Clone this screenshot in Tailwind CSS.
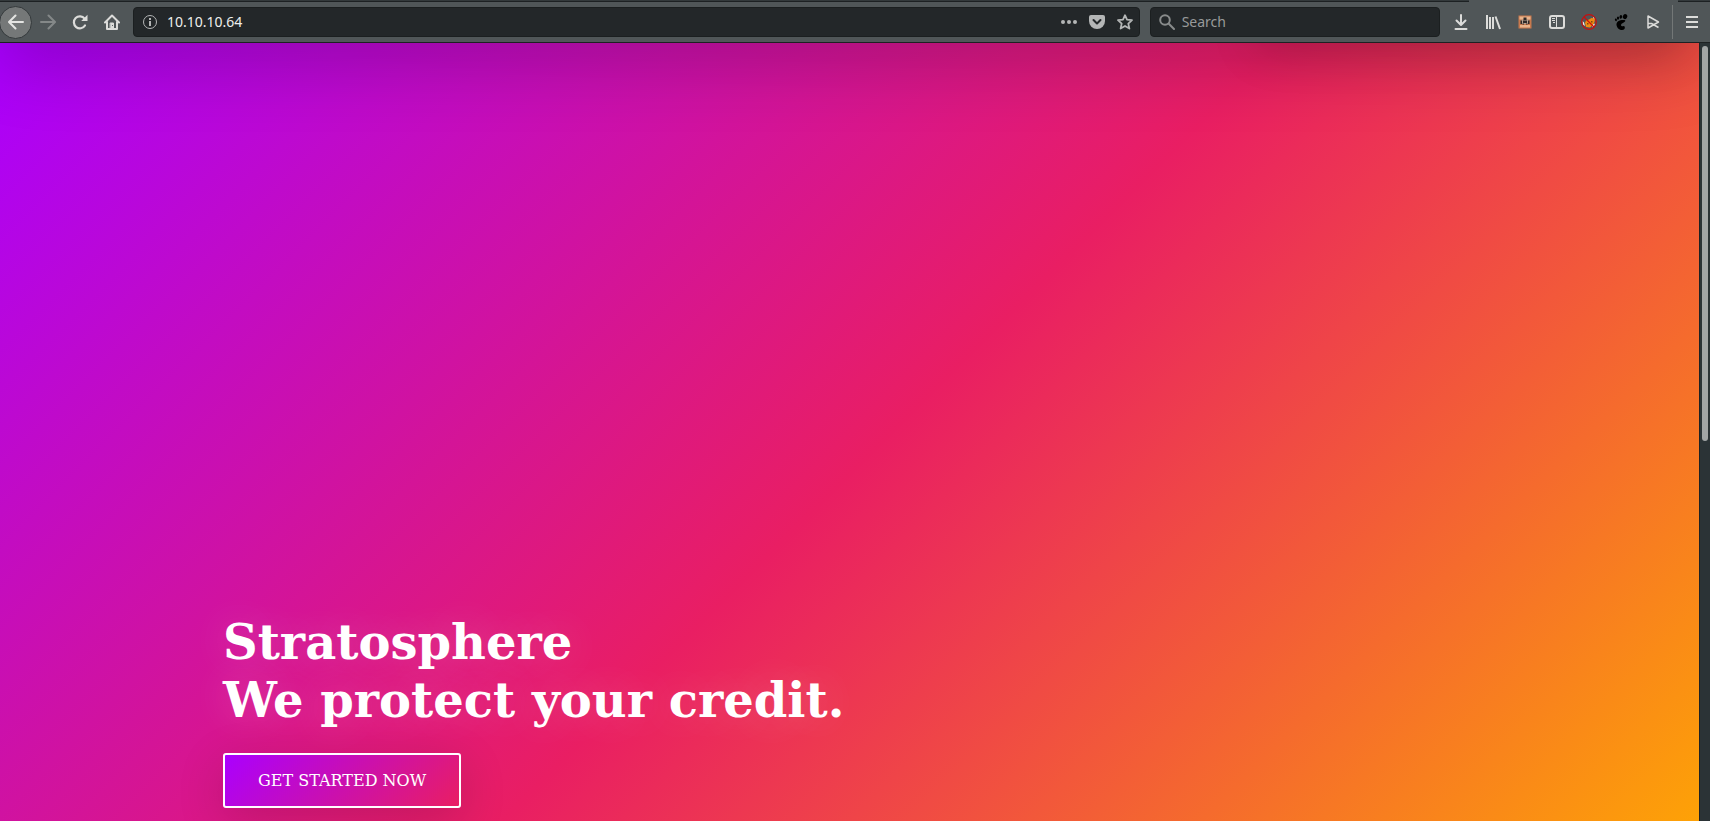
<!DOCTYPE html>
<html lang="en">
<head>
<meta charset="utf-8">
<title>Stratosphere</title>
<script src="https://cdn.jsdelivr.net/npm/@tailwindcss/browser@4"></script>
</head>
<body class="flex h-screen flex-col overflow-hidden bg-[#2b3336] font-['Noto_Sans',sans-serif]">
<header class="shrink-0 border-b border-[#1d2123] bg-[#505658]">
  <!-- lower edge of the tab strip; the gap is the active tab -->
  <div class="flex h-[2px]">
    <div class="grow border-b border-[#1d2123] bg-[#33393b]"></div>
    <div class="w-[209px]"></div>
    <div class="w-[32px] border-b border-[#1d2123] bg-[#33393b]"></div>
  </div>
  <div class="flex h-10 items-center pr-[2px]">
    <nav class="flex items-center" aria-label="Navigation">
      <button aria-label="Back" class="-ml-px grid size-[33px] place-items-center rounded-full border border-[#34393b] bg-[#757878] text-[#e4e4e2]">
        <svg class="size-4" viewBox="0 0 16 16" fill="none" stroke="currentColor" stroke-width="2" stroke-linecap="round" stroke-linejoin="round"><path d="M15 8H1.500M7.500 1.500L1 8l6.500 6.500"/></svg>
      </button>
      <button aria-label="Forward" class="grid size-8 place-items-center text-[#848888]">
        <svg class="size-4" viewBox="0 0 16 16" fill="none" stroke="currentColor" stroke-width="2" stroke-linecap="round" stroke-linejoin="round"><path d="M1 8h13.500M8.500 1.500L15 8l-6.500 6.500"/></svg>
      </button>
      <button aria-label="Reload" class="grid size-8 place-items-center text-[#dcdcda]">
        <svg class="size-4" viewBox="0 0 16 16"><path d="M12.600 4.600A6 6 0 1 0 13 11.500" fill="none" stroke="currentColor" stroke-width="2.200" stroke-linecap="round"/><path d="M15.500 0.800V7H9.200z" fill="currentColor"/></svg>
      </button>
      <button aria-label="Home" class="grid size-8 place-items-center text-[#dcdcda]">
        <svg class="size-4" viewBox="0 0 16 16" fill="none" stroke="currentColor" stroke-width="2" stroke-linecap="round" stroke-linejoin="round"><path d="M1 8.500L8 1.500l7 7M3 8v7h10V8"/><path d="M6.500 9h3v5.500h-3z" fill="currentColor" stroke-width="1"/><path d="M8.500 11.500v.1" stroke="#505658" stroke-width="1"/></svg>
      </button>
    </nav>
    <div class="ml-[5px] flex h-[30px] grow items-center rounded border border-[#1b1f20] bg-[#232729] pr-[6px] pl-2 text-[#b4b6b6]">
      <svg class="size-4" viewBox="0 0 16 16" fill="none" stroke="currentColor"><circle cx="8" cy="8" r="6.500"/><path d="M8 7v5M8 4v2" stroke-width="2"/></svg>
      <input aria-label="Address" value="10.10.10.64" class="ml-[9px] min-w-0 grow bg-transparent text-sm text-[#eeeeec] outline-none">
      <div class="flex items-center gap-3">
        <button aria-label="Page actions"><svg class="block size-4" viewBox="0 0 16 16" fill="currentColor"><circle cx="2" cy="8" r="2"/><circle cx="8" cy="8" r="2"/><circle cx="14" cy="8" r="2"/></svg></button>
        <button aria-label="Save to Pocket"><svg class="block size-4" viewBox="0 0 16 16"><path d="M2 1h12q2 0 2 2v4a8 8 0 0 1-16 0V3q0-2 2-2z" fill="currentColor"/><path d="M4.500 6L8 9.500 11.500 6" fill="none" stroke="#232729" stroke-width="2" stroke-linecap="round" stroke-linejoin="round"/></svg></button>
        <button aria-label="Bookmark"><svg class="block size-4" viewBox="0 0 16 16" fill="none" stroke="currentColor" stroke-width="1.800" stroke-linejoin="round"><path d="M8 1.200l2 4.500 5 .5-3.700 3.400 1.100 5L8 12l-4.400 2.600 1.100-5L1 6.200l5-.5z"/></svg></button>
      </div>
    </div>
    <label class="ml-[10px] flex h-[30px] w-[17%] items-center rounded border border-[#1b1f20] bg-[#232729] pl-2 text-[#888b8b]">
      <svg class="size-4" viewBox="0 0 16 16" fill="none" stroke="currentColor" stroke-width="2" stroke-linecap="round"><circle cx="6" cy="6" r="4.800"/><path d="M9.800 9.800L15 15"/></svg>
      <input aria-label="Search" placeholder="Search" class="ml-[7px] min-w-0 grow bg-transparent text-sm outline-none placeholder:text-[#989a9a]">
    </label>
    <div class="ml-[5px] flex items-center text-[#dcdcda]">
      <button aria-label="Downloads" class="grid size-8 place-items-center"><svg class="size-4" viewBox="0 0 16 16" fill="none" stroke="currentColor" stroke-width="2" stroke-linecap="round" stroke-linejoin="round"><path d="M8 1v9.500M3.500 6.500L8 11l4.500-4.500M2.500 15h11"/></svg></button>
      <button aria-label="Library" class="grid size-8 place-items-center"><svg class="size-4" viewBox="0 0 16 16" fill="none" stroke="currentColor" stroke-width="2"><path d="M2 1v14M5 3v12M8 3v12M10.500 2.500L15 15"/></svg></button>
      <button aria-label="Robot extension" class="grid size-8 place-items-center"><svg class="size-4" viewBox="0 0 16 16"><path fill="#c9794d" d="M1.500 1.500h13v13h-13z"/><path fill="#e9b48c" d="M2.500 2.500h11v3h-11zM3 11h10v2.500H3z"/><path fill="#b7a08e" d="M4 5.500h8V10H4z"/><path fill="#2f2a29" d="M6.500 3.500h3V6h-3zM6 6.500h4V9H6zM3.500 6.500H5V10H3.500zM11 6.500h1.500V10H11zM5.500 9.500H7v1H5.500zM9 9.500h1.500v1H9z"/></svg></button>
      <button aria-label="Sidebars" class="grid size-8 place-items-center"><svg class="size-4" viewBox="0 0 16 16" fill="none" stroke="currentColor"><rect x="1" y="2" width="14" height="12" rx="2" stroke-width="2"/><path d="M7.500 2v12"/><path d="M3 4.500h3M3 6.500h3M4 8.500h2"/></svg></button>
      <button aria-label="Proxy disabled" class="grid size-8 place-items-center"><svg class="size-4" viewBox="0 0 16 16"><path fill="#ee8a12" d="M4 9l1-2.500 3-1L10.500 4 14 4.500 13.500 8 12 11l-3 2.500-4-.5z"/><path fill="#f3efe8" d="M1.500 7L3 8.500 4 12l-2-1.500zM12 10.500l2-1-1 2.500-2 1.500zM12.500 2.800l1.500 1.700-2-.3z"/><path fill="#7b4a10" d="M6 9h1.500v1.500H6zM10 7h1.500v1.500H10z"/><circle cx="8" cy="8" r="7.300" fill="none" stroke="#c80f0f" stroke-width="1.200"/><path d="M3 3l10 10" stroke="#c80f0f" stroke-width="1.200"/></svg></button>
      <button aria-label="GNOME Shell integration" class="grid size-8 place-items-center text-black"><svg class="size-4" viewBox="0 0 16 16" fill="currentColor"><ellipse cx="12" cy="2.600" rx="2.200" ry="2.500" transform="rotate(25 12 2.600)"/><ellipse cx="7.800" cy="2.800" rx="1.300" ry="1.900" transform="rotate(10 7.800 2.800)"/><ellipse cx="5" cy="4.100" rx="1.100" ry="1.600"/><ellipse cx="2.900" cy="5.800" rx="1" ry="1.400" transform="rotate(-15 2.900 5.800)"/><path d="M11.500 6C7 5.500 3 7.500 3.500 11c.4 3 3 5 5.500 5 2.300 0 3.300-1.800 2.700-3.300-.6-1.200-1.600-.4-2.500-.4-1.400 0-1.600-1.800-.3-2.700C10.500 8.600 14 7 11.500 6z"/></svg></button>
      <button aria-label="Launcher" class="grid size-8 place-items-center"><svg class="size-4" viewBox="0 0 16 16" fill="none" stroke="currentColor" stroke-width="1.500" stroke-linejoin="round"><path d="M3 2v12l10.500-6zM3 9.500h3.500L13.500 13.500"/></svg></button>
      <div class="mx-[3px] h-[34px] w-px bg-[#737777]"></div>
      <button aria-label="Menu" class="grid size-8 place-items-center"><svg class="size-4" viewBox="0 0 16 16" fill="none" stroke="currentColor" stroke-width="2"><path d="M2 3h12M2 8h12M2 13h12"/></svg></button>
    </div>
  </div>
</header>
<div class="flex min-h-0 grow">
  <main class="relative min-w-0 grow overflow-hidden bg-[linear-gradient(135deg,#aa00ff_0%,#e91e63_51.7%,#ffab00_103.4%)]">
    <!-- shadows of the site header and its menu, scrolled just out of view -->
    <div class="absolute inset-x-0 -top-16 h-16 shadow-[0_16px_72px_rgba(0,0,0,0.24)]"></div>
    <div class="absolute -top-16 right-4 left-[74%] h-16 shadow-[0_6px_48px_rgba(0,0,0,0.15)]"></div>
    <div class="flex h-full flex-col justify-end pb-[13px] pl-[223px]">
      <h1 class="font-['DejaVu_Serif',serif] text-5xl leading-[58px] font-bold text-white text-shadow-[0_0_40px_rgba(255,255,255,0.22)]">Stratosphere<br>We protect your credit.</h1>
      <a href="#" class="mt-6 self-start rounded-[3px] border-2 border-white bg-[linear-gradient(135deg,#aa00ff,#e91e63)] px-[33px] py-[13px] font-['DejaVu_Serif',serif] text-base leading-[25px] text-white shadow-[0_12px_48px_rgba(0,0,0,0.15)]">GET STARTED NOW</a>
    </div>
  </main>
  <div class="w-[11px] border-l border-[#1d2123] bg-[#2b3336] pt-[3px] pl-[2px]" aria-hidden="true"><div class="h-[51%] w-[6px] rounded-full bg-[#a2a5a5]"></div></div>
</div>
</body>
</html>
